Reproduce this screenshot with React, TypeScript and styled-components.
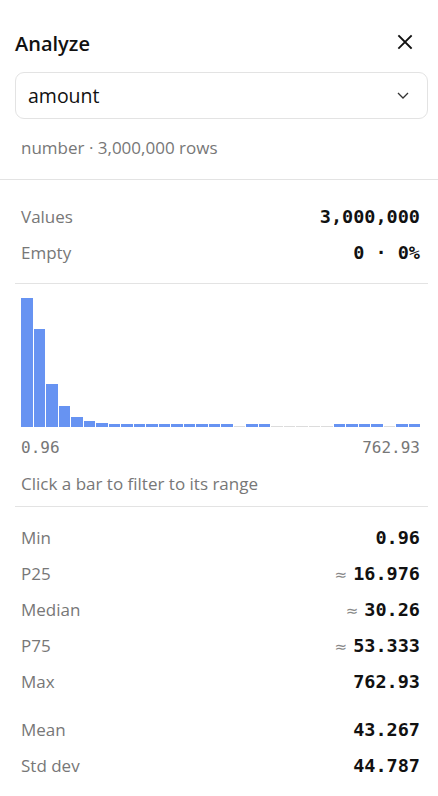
import React from 'react';
import styled, { createGlobalStyle } from 'styled-components';

const GlobalStyle = createGlobalStyle`
  html, body {
    margin: 0;
    padding: 0;
    background: #ffffff;
  }
  body {
    font-family: 'Open Sans', 'Noto Sans', sans-serif;
    color: #111;
  }
`;

// histogram bin heights in px (0 = empty bin)
const bins = [
  129, 98, 43, 21, 10, 6, 4, 3, 3, 3, 3, 3, 3, 3, 3, 3,
  3, 0, 3, 3, 0, 0, 0, 0, 0, 3, 3, 3, 3, 0, 3, 3,
];

const summary = [
  { label: 'Values', value: '3,000,000' },
  { label: 'Empty', value: '0 · 0%' },
];

const quantiles = [
  { label: 'Min', value: '0.96' },
  { label: 'P25', value: '16.976', approx: true },
  { label: 'Median', value: '30.26', approx: true },
  { label: 'P75', value: '53.333', approx: true },
  { label: 'Max', value: '762.93' },
];

const moments = [
  { label: 'Mean', value: '43.267' },
  { label: 'Std dev', value: '44.787' },
];

const App = () => {
  return (
    <Panel>
      <GlobalStyle />
      <Header>
        <Title>Analyze</Title>
        <CloseButton aria-label="Close">
          <svg width="16" height="16" viewBox="0 0 16 16" fill="none">
            <path d="M2 2l12 12M14 2L2 14" stroke="#111" strokeWidth="1.8" strokeLinecap="square" />
          </svg>
        </CloseButton>
      </Header>

      <Select>
        <SelectText>amount</SelectText>
        <svg width="12" height="7" viewBox="0 0 12 7" fill="none">
          <path d="M1 1l5 5 5-5" stroke="#333" strokeWidth="1.3" />
        </svg>
      </Select>

      <Meta>number · 3,000,000 rows</Meta>

      <FullDivider />

      <Section $top={18} $bottom={13}>
        {summary.map((s) => (
          <StatRow key={s.label}>
            <StatLabel>{s.label}</StatLabel>
            <StatValue>{s.value}</StatValue>
          </StatRow>
        ))}
      </Section>

      <Divider />

      <Section $top={13} $bottom={12}>
        <Chart>
          {bins.map((h, i) => (
            <Bar key={i} $empty={h === 0} style={{ height: h === 0 ? 1 : h }} />
          ))}
        </Chart>
        <AxisRow>
          <span>0.96</span>
          <span>762.93</span>
        </AxisRow>
        <Hint>Click a bar to filter to its range</Hint>
      </Section>

      <Divider />

      <Section $top={12} $bottom={12}>
        {quantiles.map((s) => (
          <StatRow key={s.label}>
            <StatLabel>{s.label}</StatLabel>
            <StatValue>
              {s.approx && <Approx>≈</Approx>}
              {s.value}
            </StatValue>
          </StatRow>
        ))}
        <Spacer />
        {moments.map((s) => (
          <StatRow key={s.label}>
            <StatLabel>{s.label}</StatLabel>
            <StatValue>{s.value}</StatValue>
          </StatRow>
        ))}
      </Section>
    </Panel>
  );
};

const Panel = styled.div`
  width: 438px;
  box-sizing: border-box;
  padding: 0 10px 0 15px;
`;

const Header = styled.div`
  display: flex;
  align-items: center;
  justify-content: space-between;
  height: 72px;
  padding-top: 16px;
  box-sizing: border-box;
`;

const Title = styled.h2`
  margin: 0;
  font-size: 20px;
  font-weight: 600;
  color: #111;
  line-height: 24px;
`;

const CloseButton = styled.button`
  display: flex;
  align-items: center;
  justify-content: center;
  width: 28px;
  height: 28px;
  margin-right: 9px;
  padding: 0;
  border: none;
  background: transparent;
  cursor: pointer;
  position: relative;
  top: -2px;
`;

const Select = styled.div`
  display: flex;
  align-items: center;
  justify-content: space-between;
  height: 47px;
  box-sizing: border-box;
  border: 1px solid #e3e3e3;
  border-radius: 9px;
  padding: 0 18px 0 12px;
`;

const SelectText = styled.span`
  font-size: 19.5px;
  color: #111;
`;

const Meta = styled.div`
  margin: 19px 0 0 6px;
  font-size: 17px;
  line-height: 20px;
  color: #777;
`;

const FullDivider = styled.hr`
  margin: 21px -10px 0 -15px;
  border: none;
  border-top: 1px solid #e3e3e3;
`;

const Divider = styled.hr`
  margin: 0;
  border: none;
  border-top: 1px solid #e3e3e3;
`;

const Section = styled.div<{ $top: number; $bottom: number }>`
  padding: ${(p) => p.$top}px 8px ${(p) => p.$bottom}px 6px;
`;

const StatRow = styled.div`
  display: flex;
  align-items: center;
  justify-content: space-between;
  height: 36px;
`;

const StatLabel = styled.span`
  font-size: 17px;
  color: #777;
`;

const StatValue = styled.span`
  font-family: 'DejaVu Sans Mono', 'Liberation Mono', monospace;
  font-size: 18.5px;
  font-weight: 700;
  color: #111;
  display: flex;
  align-items: baseline;
`;

const Approx = styled.span`
  font-family: 'DejaVu Sans', sans-serif;
  font-size: 15px;
  font-weight: 400;
  color: #888;
  margin-right: 6px;
`;

const Spacer = styled.div`
  height: 12px;
`;

const Chart = styled.div`
  display: grid;
  grid-template-columns: repeat(32, 1fr);
  column-gap: 1px;
  align-items: end;
  height: 130px;
`;

const Bar = styled.div<{ $empty: boolean }>`
  background: ${(p) => (p.$empty ? '#dcdcdc' : '#6793f2')};
  cursor: pointer;
`;

const AxisRow = styled.div`
  display: flex;
  justify-content: space-between;
  margin-top: 11px;
  font-family: 'DejaVu Sans Mono', 'Liberation Mono', monospace;
  font-size: 16px;
  line-height: 20px;
  color: #777;
`;

const Hint = styled.div`
  margin-top: 16px;
  font-size: 17px;
  line-height: 20px;
  color: #777;
`;

export default App;
